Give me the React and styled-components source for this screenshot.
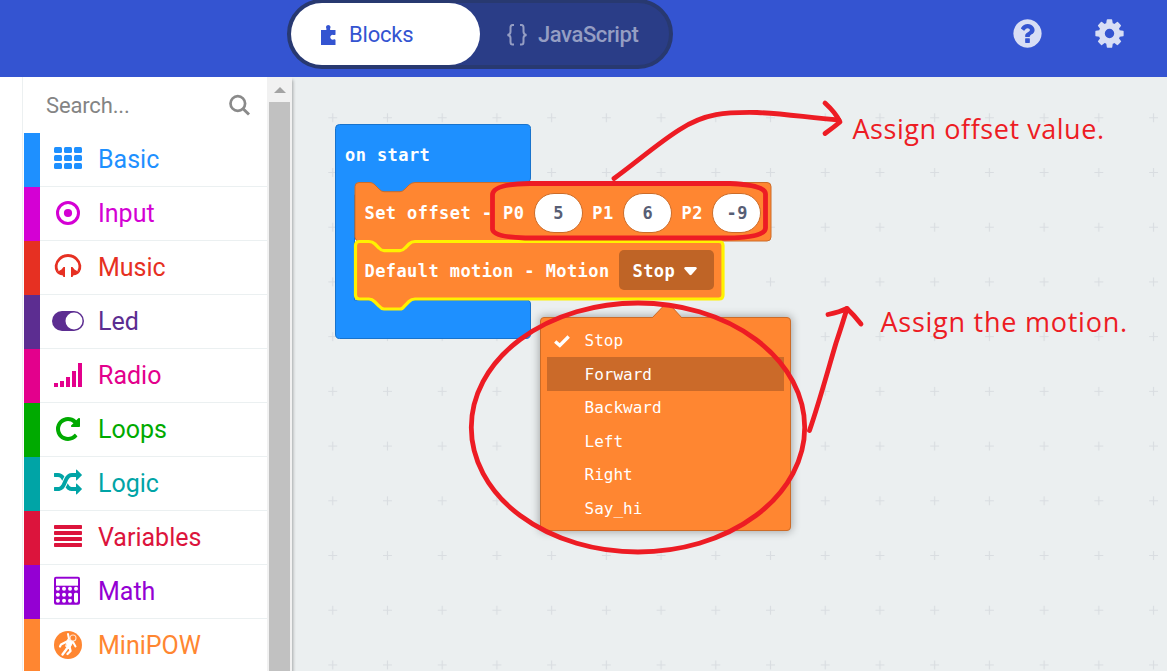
import React from 'react';
import styled, { createGlobalStyle } from 'styled-components';

const GlobalStyle = createGlobalStyle`
  *, *::before, *::after { box-sizing: border-box; }
  html, body { margin: 0; padding: 0; height: 100%; overflow: hidden; background: #fff; }
  body { font-family: Roboto, "Liberation Sans", sans-serif; }
  svg { display: block; flex: none; }
`;

const MONO = '"DejaVu Sans Mono", "Liberation Mono", monospace';
const ORANGE = '#ff8631';

const Page = styled.div`
  width: 1167px;
  height: 671px;
  display: flex;
  flex-direction: column;
  overflow: hidden;
`;

const Header = styled.header`
  height: 77px;
  flex: none;
  background: #3454d1;
  display: flex;
  align-items: flex-start;
  padding-left: 287px;
`;

const ModeSwitch = styled.div`
  display: flex;
  width: 386px;
  height: 70px;
  margin-top: -1px;
  border: 4px solid #283970;
  border-radius: 35px;
  background: #2a3d87;
`;

const Mode = styled.button`
  border: 0;
  height: 62px;
  width: 189px;
  border-radius: 31px;
  padding: 1px 0 0 ${(p) => (p.$active ? 29 : 26)}px;
  display: flex;
  align-items: center;
  background: ${(p) => (p.$active ? '#fff' : 'transparent')};
  color: ${(p) => (p.$active ? '#3454d1' : '#959ec3')};
  font: ${(p) => (p.$active ? 400 : 500)} 22px/28px Roboto, sans-serif;
  letter-spacing: ${(p) => (p.$active ? -0.2 : -0.4)}px;
  gap: ${(p) => (p.$active ? 12 : 10)}px;
`;

const HeaderActions = styled.div`
  display: flex;
  gap: 49px;
  margin: 17px 0 0 338px;
  color: #d8def5;
`;

const Body = styled.div`
  flex: 1;
  display: flex;
  min-height: 0;
`;

const Toolbox = styled.aside`
  width: 245px;
  margin-left: 22px;
  flex: none;
  border-left: 1px solid #ecf0f1;
  padding-left: 1px;
  background: #fff;
`;

const SearchBox = styled.div`
  height: 56px;
  display: flex;
  align-items: center;
  justify-content: space-between;
  padding: 0 16px 0 22px;
  color: #848484;
  font-size: 22px;
  letter-spacing: -0.15px;
`;

const Category = styled.div`
  height: 54px;
  display: flex;
  align-items: center;
  color: ${(p) => p.$color};
  border-left: 16px solid ${(p) => p.$color};
  font-size: 25px;
  line-height: 52px;
  background: linear-gradient(#ebf0f1, #ebf0f1) 0 100% / 100% 1px no-repeat;
`;

const IconCell = styled.span`
  width: 32px;
  height: 32px;
  margin: 0 14px 2px 12px;
  display: flex;
  align-items: center;
  justify-content: center;
`;

const ScrollTrack = styled.div`
  width: 25px;
  flex: none;
  background: #f1f1f1;
  display: flex;
  flex-direction: column;
  align-items: center;
  padding-top: 10px;
  gap: 9px;
  z-index: 1;
  box-shadow: 1px 3px 3px rgba(0, 0, 0, 0.3);
  clip-path: inset(0 -6px 0 0);
`;

const ScrollThumb = styled.div`
  flex: 1;
  width: 21px;
  background: #c1c1c1;
`;

const Canvas = styled.main`
  flex: 1;
  position: relative;
  overflow: hidden;
  background: #ebeff0;
`;

const Layer = styled.svg`
  position: absolute;
  top: 0;
  left: -292px;
  pointer-events: none;
`;

const BlockText = styled.div`
  position: absolute;
  left: ${(p) => p.$x}px;
  top: ${(p) => p.$y}px;
  height: 40px;
  display: flex;
  align-items: center;
  color: #fff;
  font: bold 17px/40px ${MONO};
  letter-spacing: 0.42px;
  white-space: pre;
`;

const NumberField = styled.span`
  width: 49px;
  height: 40px;
  margin: 0 9.7px 1px 9.3px;
  padding-left: 1px;
  border: 1px solid #cc6c28;
  border-radius: 20px;
  background: #fff;
  color: #575e75;
  text-align: center;
  line-height: 39px;
`;

const SelectField = styled.span`
  width: 95px;
  height: 40px;
  margin: 0 0 2px 9px;
  padding: 2px 0 0 14px;
  border-radius: 5px;
  background: #bf6426;
  display: flex;
  align-items: center;
  gap: 9px;
`;

const Menu = styled.div`
  position: absolute;
  left: 248px;
  top: 240px;
  width: 251px;
  height: 214px;
  padding: 5.8px 6px;
  border: 1px solid #cc6c28;
  border-radius: 4px;
  background: ${ORANGE};
  box-shadow: 0 0 8px 1px rgba(0, 0, 0, 0.3);
`;

const MenuPointer = styled.svg`
  position: absolute;
  left: 110px;
  top: -13px;
`;

const MenuItem = styled.div`
  height: 33.5px;
  display: flex;
  align-items: center;
  padding-left: 7px;
  background: ${(p) => (p.$hovered ? '#cb6a29' : 'transparent')};
  color: #fff;
  font: 16px/33px ${MONO};
`;

const CheckCell = styled.span`
  width: 30.5px;
  padding-top: 2px;
`;

const Note = styled.div`
  position: absolute;
  left: ${(p) => p.$x}px;
  top: ${(p) => p.$y}px;
  color: #ed1c24;
  font: 400 27px/36px "Open Sans", "Noto Sans", sans-serif;
  letter-spacing: ${(p) => p.$spacing}px;
  white-space: nowrap;
`;

const Glyph = ({ size = 28, d }) => (
  <svg width={size} height={size} viewBox="0 0 1792 1792" fill="currentColor"><path d={d} /></svg>
);

const HELP = 'M1024 1376v-192q0-14-9-23t-23-9h-192q-14 0-23 9t-9 23v192q0 14 9 23t23 9h192q14 0 23-9t9-23zm256-672q0-88-55.5-163t-138.5-116-170-41q-243 0-371 213-15 24 8 42l132 100q7 6 19 6 16 0 25-12 53-68 86-92 34-24 86-24 48 0 85.5 26t37.5 59q0 38-20 61t-68 45q-63 28-115.5 86.5t-52.5 125.5v36q0 14 9 23t23 9h192q14 0 23-9t9-23q0-19 21.5-49.5t54.5-49.5q32-18 49-28.5t46-35 44.5-48 28-60.5 12.5-81zm384 192q0 209-103 385.5t-279.5 279.5-385.5 103-385.5-103-279.5-279.5-103-385.5 103-385.5 279.5-279.5 385.5-103 385.5 103 279.5 279.5 103 385.5z';
const COG = 'M1152 896q0-106-75-181t-181-75-181 75-75 181 75 181 181 75 181-75 75-181zm512-109v222q0 12-8 23t-20 13l-185 28q-19 54-39 91 35 50 107 138 10 12 10 25t-9 23q-27 37-99 108t-94 71q-12 0-26-9l-138-108q-44 23-91 38-16 136-29 186-7 28-36 28h-222q-14 0-24.5-8.5t-11.5-21.5l-28-184q-49-16-90-37l-141 107q-10 9-25 9-14 0-25-11-126-114-165-168-7-10-7-23 0-12 8-23 15-21 51-66.5t54-70.5q-27-50-41-99l-183-27q-13-2-21-12.5t-8-23.5v-222q0-12 8-23t19-13l186-28q14-46 39-92-40-57-107-138-10-12-10-24 0-10 9-23 26-36 98.5-107.5t94.5-71.5q13 0 26 10l138 107q44-23 91-38 16-136 29-186 7-28 36-28h222q14 0 24.5 8.5t11.5 21.5l28 184q49 16 90 37l142-107q9-9 24-9 13 0 25 10 129 119 165 170 7 8 7 22 0 12-8 23-15 21-51 66.5t-54 70.5q26 50 41 98l183 28q13 2 21 12.5t8 23.5z';
const REPEAT = 'M1664 256v448q0 26-19 45t-45 19h-448q-42 0-59-40-17-39 14-69l138-138q-148-137-349-137-104 0-198.5 40.5t-163.5 109.5-109.5 163.5-40.5 198.5 40.5 198.5 109.5 163.5 163.5 109.5 198.5 40.5q119 0 225-52t179-147q7-10 23-12 15 0 25 9l137 138q9 8 9.5 20.5t-7.5 22.5q-109 132-264 204.5t-327 72.5q-156 0-298-61t-245-164-164-245-61-298 61-298 164-245 245-164 298-61q147 0 284.5 55.5t244.5 156.5l130-129q29-31 70-14 39 17 39 59z';
const RANDOM = 'M666 481q-60 92-137 273-22-45-37-72.5t-40.5-63.5-51-56.5-63-35-81.5-14.5h-224q-14 0-23-9t-9-23v-192q0-14 9-23t23-9h224q250 0 410 225zm1126 799q0 14-9 23l-320 320q-9 9-23 9-13 0-22.5-9.5t-9.5-22.5v-192q-32 0-85 .5t-81 1-73-1-71-5-64-10.5-63-18.5-58-28.5-59-40-55-53.5-56-69.5q59-93 136-273 22 45 37 72.5t40.5 63.5 51 56.5 63 35 81.5 14.5h256v-192q0-14 9-23t23-9q12 0 24 10l319 319q9 9 9 23zm0-896q0 14-9 23l-320 320q-9 9-23 9-13 0-22.5-9.5t-9.5-22.5v-192h-256q-48 0-87 15t-69 45-51 61.5-45 77.5q-32 62-78 171-29 66-49.5 111t-54 105-64 100-74 83-90 68.5-106.5 42-128 16.5h-224q-14 0-23-9t-9-23v-192q0-14 9-23t23-9h224q48 0 87-15t69-45 51-61.5 45-77.5q32-62 78-171 29-66 49.5-111t54-105 64-100 74-83 90-68.5 106.5-42 128-16.5h256v-192q0-14 9-23t23-9q12 0 24 10l319 319q9 9 9 23z';

const Drawing = ({ children }) => (
  <svg width="32" height="32" viewBox="0 0 32 32" fill="currentColor">{children}</svg>
);

const GridIcon = () => (
  <Drawing>
    {[4, 12, 20].map((y) => [2, 12, 22].map((x) => <rect key={`${x}-${y}`} x={x} y={y} width="8" height="6" rx="1.5" />))}
  </Drawing>
);

const TargetIcon = () => (
  <Drawing>
    <circle cx="16" cy="16" r="10.5" fill="none" stroke="currentColor" strokeWidth="3" />
    <circle cx="16" cy="16" r="4.1" />
  </Drawing>
);

const HeadphonesIcon = () => (
  <Drawing>
    <path d="M5.500 20.500C3.500 17.800 3.200 12 7.500 8C12 3.300 20 3.300 24.500 8C28.800 12 28.500 17.800 26.500 20.500" fill="none" stroke="currentColor" strokeWidth="2.800" />
    <path d="M13 16V26H11.500L10.500 24.300Q6.500 24.500 4 20.500Q7 20.500 9.500 18.500L11.500 16Z" />
    <path d="M19 16V26H20.500L21.500 24.300Q25.500 24.500 28 20.500Q25 20.500 22.500 18.500L20.500 16Z" />
  </Drawing>
);

const ToggleIcon = () => (
  <Drawing>
    <rect y="6" width="32" height="20" rx="10" />
    <circle cx="22" cy="16" r="8.500" fill="#fff" />
  </Drawing>
);

const SignalIcon = () => (
  <Drawing>
    <path d="M2 24h4v4H2zM8 22h4v6H8zM14 18h4v10h-4zM20 12h4v16h-4zM26 4h4v24h-4z" />
  </Drawing>
);

const ListIcon = () => (
  <Drawing>
    {[4, 10, 16, 22].map((y) => <rect key={y} x="2" y={y} width="28" height="4" rx="0.8" />)}
  </Drawing>
);

const CalculatorIcon = () => (
  <Drawing>
    <g transform="translate(0 -0.300)">
      <rect x="2" y="2" width="26" height="28" rx="2" />
      <rect x="4" y="4" width="22" height="7" fill="#fff" />
      {[14, 20, 26].map((y) => [5.900, 12, 18, 24].map((x) => (
        x === 24 && y === 26 ? null : <circle key={`${x}-${y}`} cx={x} cy={y} r="2" fill="#fff" />
      )))}
      <rect x="22" y="18" width="4" height="10" rx="1.900" fill="#fff" />
    </g>
  </Drawing>
);

const PowIcon = () => (
  <Drawing>
    <circle cx="16" cy="16" r="14" />
    <g stroke="#fff" fill="none" strokeLinecap="round" strokeLinejoin="round">
      <path d="M16 5L17 10" strokeWidth="2" />
      <path d="M16 12L9 15.500L8 17.500" strokeWidth="2.200" />
      <path d="M16 18L13.500 21.500L10.500 25.500M17.500 18L18.500 22L15.500 25" strokeWidth="2.400" />
      <path d="M21 13L23.500 17.500" strokeWidth="2" />
      <circle cx="21" cy="9" r="3" strokeWidth="1.100" strokeOpacity="0.750" />
      <path d="M16 10.500L21 13L18 18.500L14 17.500Z" fill="#fff" strokeWidth="1" />
    </g>
  </Drawing>
);

const categories = [
  { name: 'Basic', color: '#1e90ff', icon: <GridIcon /> },
  { name: 'Input', color: '#d400d4', icon: <TargetIcon /> },
  { name: 'Music', color: '#e63022', icon: <HeadphonesIcon /> },
  { name: 'Led', color: '#5c2d91', icon: <ToggleIcon /> },
  { name: 'Radio', color: '#e3008c', icon: <SignalIcon /> },
  { name: 'Loops', color: '#00aa00', icon: <Glyph d={REPEAT} /> },
  { name: 'Logic', color: '#00a4a6', icon: <Glyph d={RANDOM} /> },
  { name: 'Variables', color: '#dc143c', icon: <ListIcon /> },
  { name: 'Math', color: '#9400d3', icon: <CalculatorIcon /> },
  { name: 'MiniPOW', color: '#ff8631', icon: <PowIcon /> },
];

const motions = ['Stop', 'Forward', 'Backward', 'Left', 'Right', 'Say_hi'];
const offsets = [['P0', '5'], ['P1', '6'], ['P2', '-9']];

const BlockShapes = () => (
  <Layer width="1167" height="594" viewBox="0 77 1167 594">
    <defs>
      <pattern id="crosses" x="305.400" y="90.400" width="54.720" height="54.720" patternUnits="userSpaceOnUse">
        <path d="M27.360 22.900v9M22.860 27.360h9" stroke="#d9dde1" strokeWidth="1.200" />
      </pattern>
    </defs>
    <rect x="292" y="77" width="875" height="594" fill="url(#crosses)" />
    <path
      d="M339.500 124.500H526Q530.500 124.500 530.500 128.500V178Q530.500 182 526 182L420 195H354.500V300H526Q530.500 300 530.500 304V334Q530.500 338.500 526 338.500H339.500Q335.500 338.500 335.500 334V128.500Q335.500 124.500 339.500 124.500Z"
      fill="#1e90ff" stroke="#1873cc"
    />
    <path
      d="M359 182.500H369C372 182.500 373.500 183.500 375 185L379 189Q381.500 191.700 384 191.700H400Q402.500 191.700 405 189L409 185Q411.500 182.500 415 182.500H767Q771 182.500 771 186.500V237Q771 241 767 241H415L404 252H380L370 241H359Q355 241 355 237V186.500Q355 182.500 359 182.500Z"
      fill={ORANGE} stroke="#cc6c28"
    />
    <path
      d="M359.500 241.500H369C372 241.500 373.500 242.500 375 244L379 248Q381.500 250.700 384 250.700H400Q402.500 250.700 405 248L409 244Q411.500 241.500 415 241.500H719Q723 241.500 723 245.500V295Q723 299 719 299H415Q411.500 299 409 301.500L405 305.500Q402.500 309 400 309H384Q381.500 309 379 306L375 302Q372 299 369 299H359.500Q355.500 299 355.500 295V245.500Q355.500 241.500 359.500 241.500Z"
      fill={ORANGE} stroke="#fff200" strokeWidth="3.200"
    />
  </Layer>
);

const Markup = () => (
  <Layer width="1167" height="594" viewBox="0 77 1167 594">
    <g fill="none" stroke="#ed1c24" strokeWidth="4.800" strokeLinecap="round" strokeLinejoin="round">
      <ellipse cx="638" cy="427.500" rx="166.700" ry="124.500" />
      <path d="M530 183.500H730Q765.500 185 765.500 194V228Q765.500 238 725 238H525Q492.500 237 492.500 229V195Q492.500 184 530 183.500Z" />
      <path d="M614 178.500C638 161 657 144 679 130C705 113 726 112 757 112.500C785 113.500 810 118 839 120" />
      <path d="M825 103Q836 113 840 122Q834 127 825 133.500" />
      <path d="M809.500 430.500C819 403 828 370 836 343Q843 322 847 308.500" />
      <path d="M828 314.500Q840 312 847 308.500Q854 315 861 324" />
    </g>
  </Layer>
);

export default function App() {
  return (
    <Page>
      <GlobalStyle />
      <Header>
        <ModeSwitch>
          <Mode $active>
            <svg width="17" height="22" viewBox="0 0 17 22" fill="currentColor">
              <path d="M1 6H5.700Q6.800 6 6.500 4.900Q6 4 6 2.800A2.300 2.300 0 0 1 10.500 2.800Q10.500 4 10 4.900Q9.700 6 10.800 6H15.500V10.500Q15 11.400 13.500 11A2.400 2.400 0 1 0 13.500 15.500Q15 15 15.500 16V21H1Z" />
            </svg>
            Blocks
          </Mode>
          <Mode>
            <svg width="22" height="22" viewBox="0 0 22 22" fill="none" stroke="currentColor" strokeWidth="2">
              <path d="M8 1H6.500Q4.500 1 4.500 3.500V7.500Q4.500 10.500 1.500 11Q4.500 11.500 4.500 14V18Q4.500 20.500 6.500 20.500H8M14 1H15.500Q17.500 1 17.500 3.500V7.500Q17.500 10.500 20.500 11Q17.500 11.500 17.500 14V18Q17.500 20.500 15.500 20.500H14" />
            </svg>
            JavaScript
          </Mode>
        </ModeSwitch>
        <HeaderActions>
          <Glyph size={33} d={HELP} />
          <Glyph size={33} d={COG} />
        </HeaderActions>
      </Header>
      <Body>
        <Toolbox>
          <SearchBox>
            Search...
            <svg width="23" height="22" viewBox="0 0 23 22" fill="none" stroke="#8a8a8a" strokeWidth="3">
              <circle cx="9.800" cy="9.500" r="7.300" strokeWidth="2.700" />
              <path d="M14.800 14.500L21 20.500" />
            </svg>
          </SearchBox>
          {categories.map((c) => (
            <Category key={c.name} $color={c.color}>
              <IconCell>{c.icon}</IconCell>
              {c.name}
            </Category>
          ))}
        </Toolbox>
        <ScrollTrack>
          <svg width="12" height="6" viewBox="0 0 12 6" fill="#a3a3a3"><path d="M0 6L6 0L12 6Z" /></svg>
          <ScrollThumb />
        </ScrollTrack>
        <Canvas>
          <BlockShapes />
          <BlockText $x={53} $y={58}>on start</BlockText>
          <BlockText $x={72.500} $y={116}>
            {'Set offset - '}
            {offsets.map(([label, value]) => (
              <React.Fragment key={label}>
                {label}
                <NumberField>{value}</NumberField>
              </React.Fragment>
            ))}
          </BlockText>
          <BlockText $x={72.500} $y={174}>
            Default motion - Motion
            <SelectField>
              Stop
              <svg width="13" height="9" viewBox="0 0 13 9" fill="#fff"><path d="M1.500 0H11.500Q13.500 0.500 12.500 2L7.500 7.800Q6.500 8.700 5.500 7.800L0.500 2Q-0.500 0.500 1.500 0Z" /></svg>
            </SelectField>
          </BlockText>
          <Menu>
            <MenuPointer width="32" height="14" viewBox="0 0 32 14">
              <path d="M1 13L11.500 2Q13 1 14.500 1H18Q19.500 1 21 2L31 13" fill={ORANGE} stroke="#cc6c28" />
              <path d="M1 13.500H31" stroke={ORANGE} />
            </MenuPointer>
            {motions.map((m) => (
              <MenuItem key={m} $hovered={m === 'Forward'}>
                <CheckCell>
                  {m === 'Stop' && (
                    <svg width="16" height="13" viewBox="0 0 16 13" fill="none" stroke="#fff" strokeWidth="3.400"><path d="M1.200 6.500L5.800 10.500L14.700 1.500" /></svg>
                  )}
                </CheckCell>
                {m}
              </MenuItem>
            ))}
          </Menu>
          <Note $x={560.500} $y={34} $spacing={0.55}>Assign offset value.</Note>
          <Note $x={588.500} $y={227} $spacing={0.75}>Assign the motion.</Note>
          <Markup />
        </Canvas>
      </Body>
    </Page>
  );
}
